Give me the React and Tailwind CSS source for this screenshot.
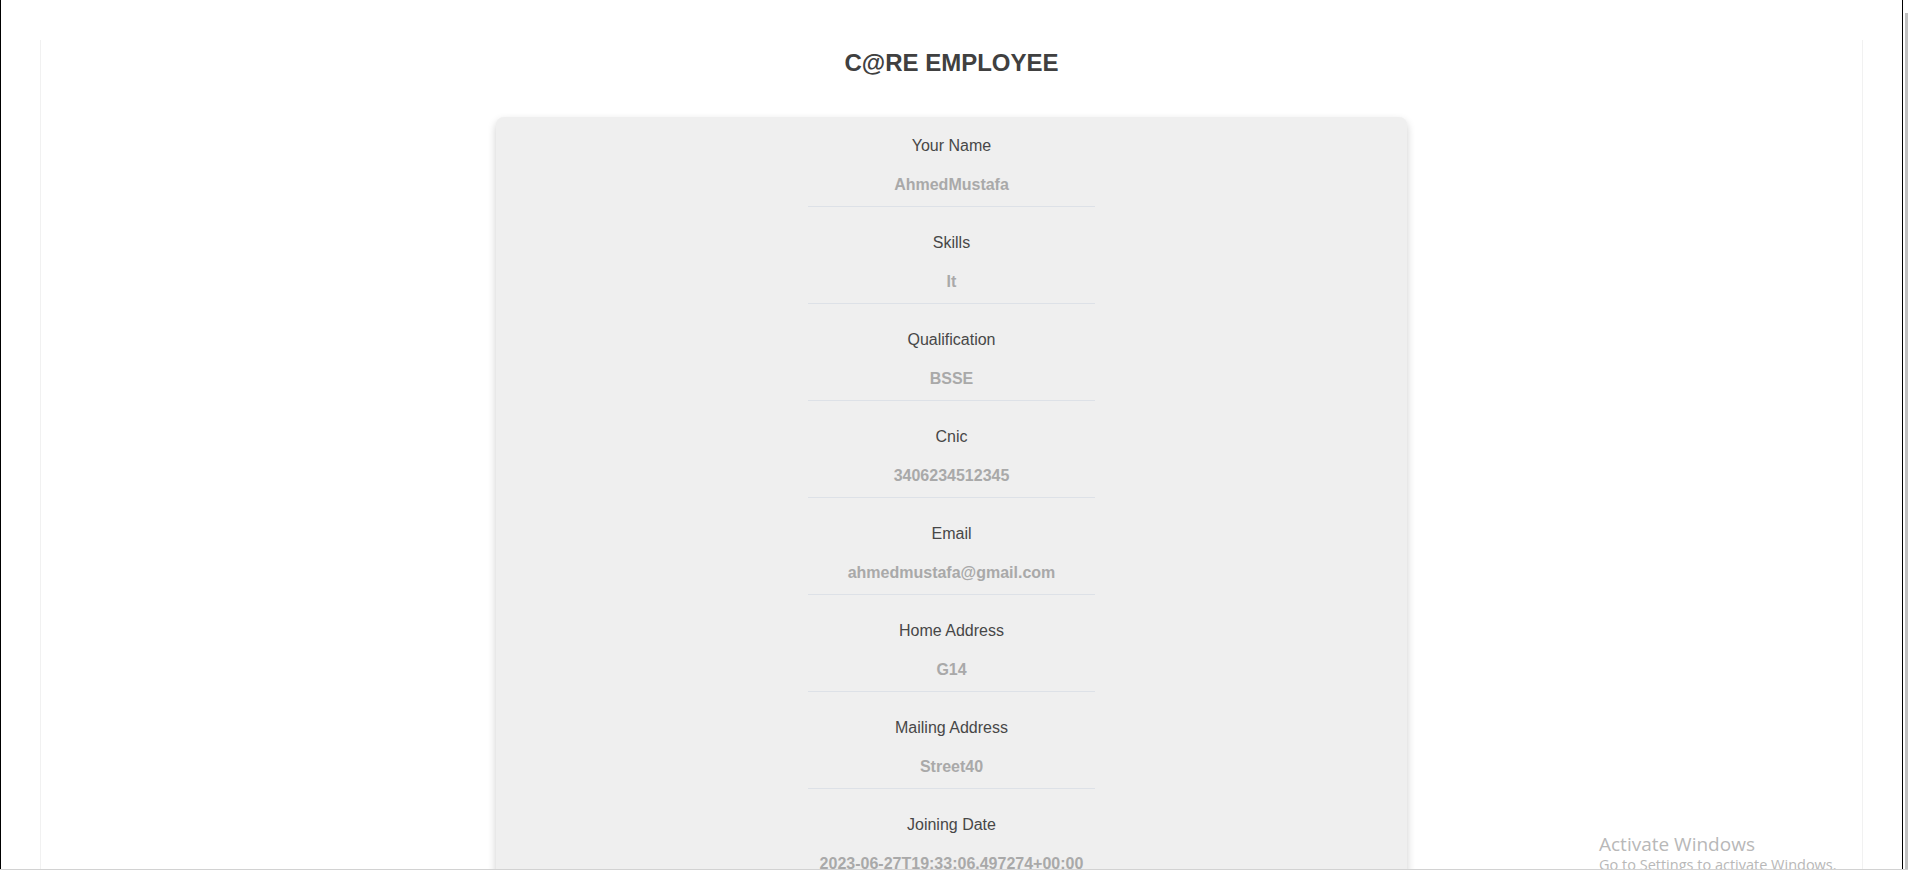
import React from 'react'

const fields = [
  { label: 'Your Name', value: 'AhmedMustafa' },
  { label: 'Skills', value: 'It' },
  { label: 'Qualification', value: 'BSSE' },
  { label: 'Cnic', value: '3406234512345' },
  { label: 'Email', value: 'ahmedmustafa@gmail.com' },
  { label: 'Home Address', value: 'G14' },
  { label: 'Mailing Address', value: 'Street40' },
  { label: 'Joining Date', value: '2023-06-27T19:33:06.497274+00:00' },
]

function Field({ label, value, first }) {
  return (
    <div className={first ? '' : 'mt-[26px]'}>
      <p className="text-[16px] leading-[20px] text-[#474747]">{label}</p>
      <p className="mt-[19px] text-[16px] leading-[20px] font-bold text-[#a9a9a9]">{value}</p>
      <div className="mx-auto mt-[11px] h-px w-[287px] bg-[#dde1e7]" />
    </div>
  )
}

export default function App() {
  return (
    <div className="flex h-[874px] w-[1908px] flex-col overflow-hidden bg-white font-['Liberation_Sans',Arial,sans-serif]">
      <div className="flex h-[869px]">
        <div className="w-px bg-black" />

        <main className="relative flex-1 overflow-hidden px-[39px] pt-[40px]">
          <div className="h-full border-x border-[#f1f1f1] pt-[9px]">
            <h1 className="text-center text-[24px] leading-[28px] font-bold text-[#404040]">C@RE EMPLOYEE</h1>

            <div className="mx-auto mt-[40px] w-1/2 rounded-lg bg-[#efefef] pt-[19px] pb-8 text-center shadow-[0_4px_8px_0_rgba(0,0,0,0.2)]">
              {fields.map((f, i) => (
                <Field key={f.label} label={f.label} value={f.value} first={i === 0} />
              ))}
            </div>
          </div>

          {/* windows watermark */}
          <div className="absolute top-[834px] left-[1598px] font-['Open_Sans',sans-serif] text-[#b8b8b8]">
            <p className="text-[19px] leading-[20px]">Activate Windows</p>
            <p className="mt-[3px] text-[14.5px] leading-[16px]">Go to Settings to activate Windows.</p>
          </div>
        </main>

        <div className="w-px bg-black" />
        <div className="flex w-[5px] flex-col pt-[13px] pl-[2px]">
          <div className="flex-1 bg-[#c1c1c1]" />
        </div>
      </div>
      <div className="h-[5px] border-t border-[#d2d2d2] bg-white" />
    </div>
  )
}
